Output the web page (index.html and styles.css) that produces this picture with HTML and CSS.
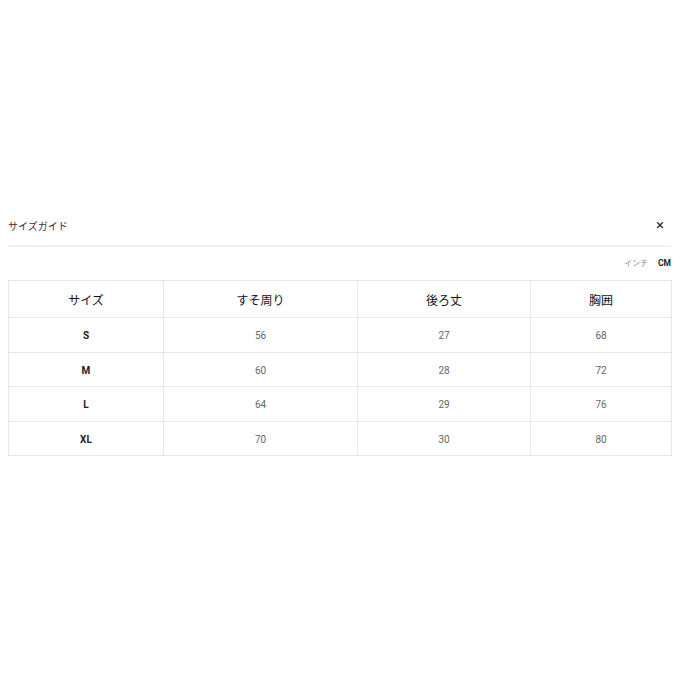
FILE: index.html
```html
<!DOCTYPE html>
<html lang="ja">
<head>
<meta charset="utf-8">
<link rel="stylesheet" href="styles.css">
</head>
<body>
<div class="page">
  <div class="head">
    <span class="title">サイズガイド</span>
    <span class="close">×</span>
  </div>
  <div class="units"><span class="unit">インチ</span><span class="unit active">CM</span></div>
  <table class="sizes">
    <colgroup><col class="c1"><col class="c2"><col class="c3"><col class="c4"></colgroup>
    <thead>
      <tr><th>サイズ</th><th>すそ周り</th><th>後ろ丈</th><th>胸囲</th></tr>
    </thead>
    <tbody>
      <tr><td class="sz">S</td><td>56</td><td>27</td><td>68</td></tr>
      <tr><td class="sz">M</td><td>60</td><td>28</td><td>72</td></tr>
      <tr><td class="sz">L</td><td>64</td><td>29</td><td>76</td></tr>
      <tr><td class="sz">XL</td><td>70</td><td>30</td><td>80</td></tr>
    </tbody>
  </table>
</div>
</body>
</html>
```
FILE: styles.css
```css
html, body { margin: 0; padding: 0; background: #fff; }
body { font-family: Roboto, "Noto Sans CJK JP", sans-serif; color: #222; }
.page { padding: 215px 9px 0 8px; }
.head {
  display: flex; justify-content: space-between; align-items: center;
  height: 21px; padding-bottom: 9px; border-bottom: 2px solid #f1f1f1;
}
.title { font-size: 10px; font-family: "Noto Sans CJK JP", sans-serif; color: #333; }
.close { font-size: 15px; font-weight: 400; color: #333; margin-right: 7px; line-height: 1; }
.units {
  display: flex; justify-content: flex-end; gap: 10px;
  margin-top: 10px; height: 12px; line-height: 12px; font-size: 8px;
}
.unit { color: #888; font-family: "Noto Sans CJK JP", sans-serif; }
.unit.active { color: #222; font-weight: 700; font-family: Roboto, sans-serif; font-size: 8.5px; }
.sizes {
  margin-top: 11px; width: 663px; border-collapse: collapse; table-layout: fixed;
  border: 1px solid #e8e8e8;
}
.c1 { width: 155px; } .c2 { width: 194px; } .c3 { width: 173px; } .c4 { width: 141px; }
.sizes th, .sizes td { border: 1px solid #e8e8e8; text-align: center; padding: 0; }
.sizes th {
  height: 36px; font-size: 12px; font-weight: 400; color: #111;
  font-family: "Noto Sans CJK JP", sans-serif;
}
.sizes td { height: 31.5px; padding-top: 2px; font-size: 10px; color: #666; }
.sizes td.sz { font-weight: 700; color: #222; }
```
